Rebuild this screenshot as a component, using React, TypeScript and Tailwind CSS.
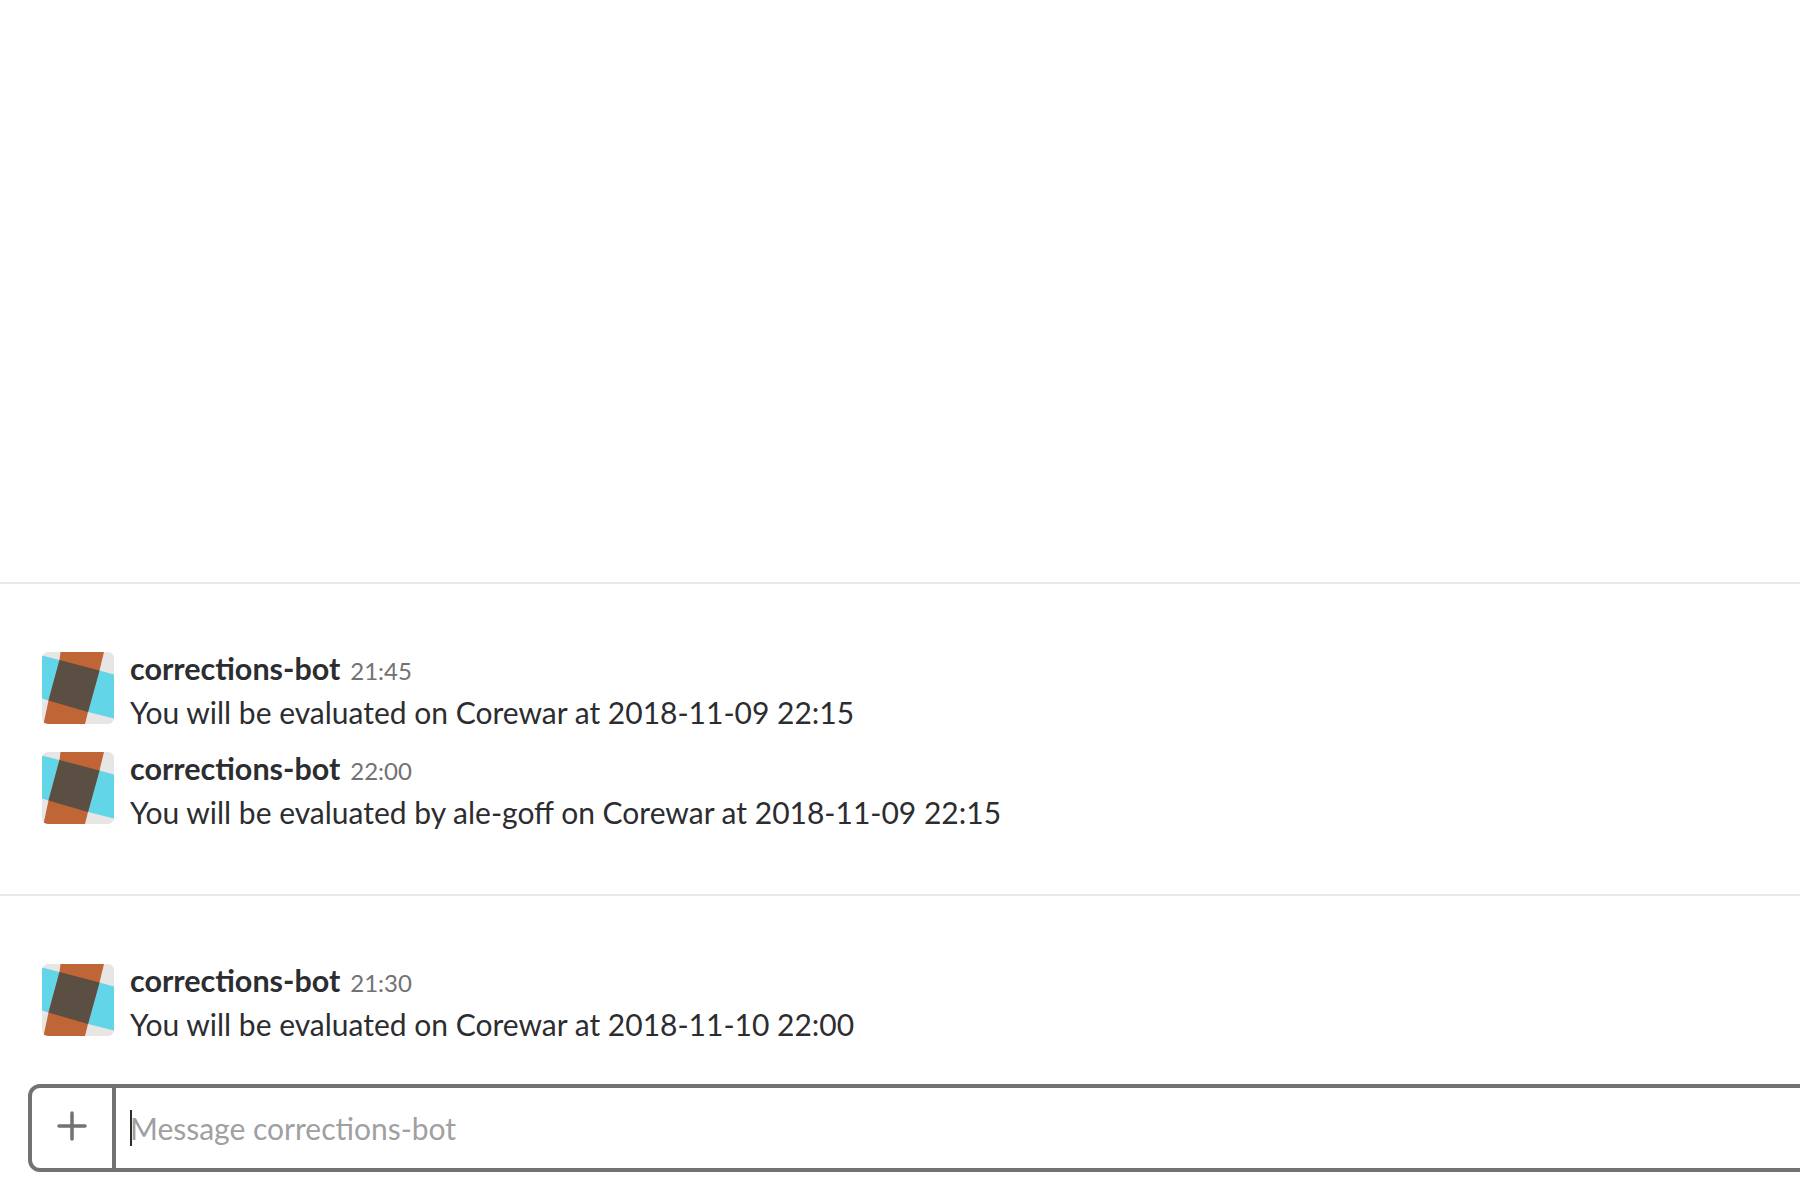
function BotAvatar() {
  return (
    <svg width="72" height="72" viewBox="0 0 72 72" className="shrink-0 rounded-[6px]">
      <rect width="72" height="72" fill="#e8e6e4" />
      <polygon points="0,3.5 17.5,8 57.5,18.5 72,22.5 72,66.5 46,60 6.5,48.5 0,46.5" fill="#62d6e8" />
      <polygon points="18.5,0 62,0 57.5,18.5 46,60 43,72 1.5,72 6.5,48.5 17.5,8" fill="#c06535" />
      <polygon points="17.5,8 57.5,18.5 46,60 6.5,48.5" fill="#5b4e42" />
    </svg>
  )
}

interface MessageProps {
  time: string
  text: string
}

function Message({ time, text }: MessageProps) {
  return (
    <div className="flex gap-4 h-[72px]">
      <BotAvatar />
      <div className="flex flex-col">
        <div className="flex items-baseline gap-[10px] h-[44px] -mt-[6px]">
          <span className="text-[30.5px] font-bold text-[#2c2d30]">corrections-bot</span>
          <span className="text-[24px] text-[#717274]">{time}</span>
        </div>
        <div className="text-[30px] leading-[44px] text-[#2c2d30]">{text}</div>
      </div>
    </div>
  )
}

export default function App() {
  return (
    <div className="h-[1200px] w-full overflow-hidden bg-white font-['Lato',sans-serif] leading-[44px]">
      <div className="h-[582px]" />
      <div className="h-[2px] bg-[#e8e8e8]" />

      <div className="flex flex-col gap-7 pl-[42px] pt-[68px] pb-[70px]">
        <Message time="21:45" text="You will be evaluated on Corewar at 2018-11-09 22:15" />
        <Message time="22:00" text="You will be evaluated by ale-goff on Corewar at 2018-11-09 22:15" />
      </div>

      <div className="h-[2px] bg-[#e8e8e8]" />

      <div className="pl-[42px] pt-[68px]">
        <Message time="21:30" text="You will be evaluated on Corewar at 2018-11-10 22:00" />
      </div>

      <div className="mt-[48px] ml-[28px] flex h-[88px] w-[1800px] rounded-[12px] border-4 border-[#717274]">
        <div className="flex w-[84px] shrink-0 items-center justify-center border-r-4 border-[#717274]">
          <svg width="30" height="30" viewBox="0 0 30 30" className="-mt-[4px]">
            <path d="M15 2v26M2 15h26" stroke="#717274" strokeWidth="3.5" strokeLinecap="round" fill="none" />
          </svg>
        </div>
        <div className="flex items-center pl-[14px]">
          <span className="h-[36px] w-[2px] bg-[#2c2d30]" />
          <span className="-ml-[2px] text-[30px] text-[#a0a0a2]">Message corrections-bot</span>
        </div>
      </div>
    </div>
  )
}
